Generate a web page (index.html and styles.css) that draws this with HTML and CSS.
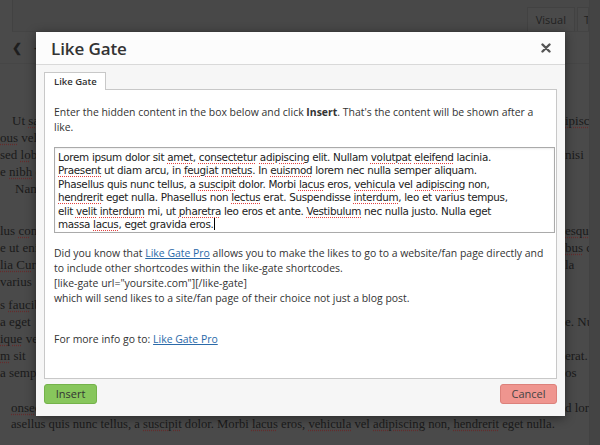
FILE: index.html
```html
<!DOCTYPE html>
<html lang="en">
<head>
<meta charset="utf-8">
<title>Like Gate</title>
<link rel="stylesheet" href="styles.css">
</head>
<body>
<div class="screen">
  <div class="editor">
    <div class="mode-row">
      <span class="mode-tab">Visual</span>
      <span class="mode-tab">Text</span>
    </div>
    <div class="toolbar">
      <span class="tool">&#10094;</span>
      <span class="tool">&#8211;</span>
    </div>
    <div class="content">
      <div class="para">
        <div class="ln"><span class="l ind1">Ut <u>sa</u>pien</span><span class="r"><u>ipisc</u>ing</span></div>
        <div class="ln"><span class="l"><u>ous</u> vel</span><span class="r"></span></div>
        <div class="ln"><span class="l">sed <u>lo</u>bortis</span><span class="r">nisi</span></div>
        <div class="ln"><span class="l">e <u>nibh</u> et</span><span class="r"></span></div>
        <div class="ln"><span class="l ind2">Nam</span><span class="r"></span></div>
      </div>
      <div class="para p2">
        <div class="ln"><span class="l">lus <u>co</u>ngue</span><span class="r"><u>esqu</u>e</span></div>
        <div class="ln"><span class="l">e ut enim</span><span class="r"><u>bus</u> c</span></div>
        <div class="ln"><span class="l"><u>lia Cu</u>rae</span><span class="r">la</span></div>
        <div class="ln"><span class="l">varius</span><span class="r"></span></div>
      </div>
      <div class="para p3">
        <div class="ln"><span class="l">s <u>fauc</u>ibus</span><span class="r"></span></div>
        <div class="ln"><span class="l">a eget</span><span class="r">e. Nulla</span></div>
        <div class="ln"><span class="l"><u>ique</u> vel</span><span class="r"></span></div>
        <div class="ln"><span class="l"><u>m</u> sit</span><span class="r">erat.</span></div>
        <div class="ln"><span class="l">a semper</span><span class="r">os</span></div>
      </div>
      <div class="para p4">
        <div class="ln"><span class="l ind3"><u>onse</u>ctetur</span><span class="r">d lorem</span></div>
        <div class="ln full">asellus quis nunc tellus, a <u>suscipit</u> dolor. Morbi <u>lacus</u> eros, <u>vehicula</u> vel <u>adipiscing</u> non, <u>hendrerit</u> eget nulla.</div>
      </div>
    </div>
  </div>

  <div class="modal">
    <div class="m-head">
      <h1 class="m-title">Like Gate</h1>
      <svg class="m-close" width="10" height="10" viewBox="0 0 10 10"><path d="M1.5 1.5 L8.5 8.5 M8.5 1.5 L1.5 8.5" stroke="#555" stroke-width="2.4" stroke-linecap="round"/></svg>
    </div>
    <div class="m-body">
      <div class="tab">Like Gate</div>
      <div class="panel">
        <p class="txt">Enter the hidden content in the box below and click <b>Insert</b>. That's the content will be shown after a<br>like.</p>
        <div class="area">Lorem ipsum dolor sit <i class="sp">amet</i>, <i class="sp">consectetur</i> <i class="sp">adipiscing</i> elit. Nullam <i class="sp">volutpat</i> <i class="sp">eleifend</i> lacinia.<br><i class="sp">Praesent</i> ut diam arcu, in <i class="sp">feugiat</i> <i class="sp">metus</i>. In <i class="sp">euismod</i> lorem nec nulla semper aliquam.<br>Phasellus quis nunc tellus, a <i class="sp">suscipit</i> dolor. Morbi <i class="sp">lacus</i> eros, <i class="sp">vehicula</i> vel <i class="sp">adipiscing</i> non,<br><i class="sp">hendrerit</i> eget nulla. Phasellus non <i class="sp">lectus</i> erat. Suspendisse <i class="sp">interdum</i>, leo et varius tempus,<br>elit <i class="sp">velit</i> <i class="sp">interdum</i> mi, ut <i class="sp">pharetra</i> leo eros et ante. <i class="sp">Vestibulum</i> nec nulla justo. Nulla eget<br>massa <i class="sp">lacus</i>, eget gravida eros.<span class="caret"></span></div>
        <p class="txt">Did you know that <a href="#">Like Gate Pro</a> allows you to make the likes to go to a website/fan page directly and<br>to include other shortcodes within the like-gate shortcodes.<br>[like-gate url="yoursite.com"][/like-gate]<br>which will send likes to a site/fan page of their choice not just a blog post.</p>
        <p class="txt more">For more info go to: <a href="#">Like Gate Pro</a></p>
      </div>
    </div>
    <div class="m-foot">
      <button class="btn insert">Insert</button>
      <button class="btn cancel">Cancel</button>
    </div>
  </div>
</div>
</body>
</html>
```

FILE: styles.css
```css
* { box-sizing: border-box; }
html, body { margin: 0; padding: 0; }
body {
  width: 600px;
  height: 445px;
  overflow: hidden;
  background: #444;
  font-family: "Open Sans", "Liberation Sans", sans-serif;
}
.screen {
  position: relative;
  width: 600px;
  height: 445px;
  overflow: hidden;
}

.editor {
  width: 590px;
  height: 445px;
  background: #4a4a4a;
  border-right: 1px solid #424242;
  overflow: hidden;
}
.mode-row {
  height: 32px;
  display: flex;
  justify-content: flex-end;
  align-items: flex-end;
  border-bottom: 1px solid #444;
  background: #484848;
  margin-left: 12px;
  border-left: 1px solid #424242;
}
.mode-tab {
  height: 24px;
  line-height: 23px;
  padding: 0 8px;
  font-size: 11px;
  color: #222;
  border: 1px solid #424242;
  border-bottom: none;
  margin-left: 2px;
  background: #4a4a4a;
  white-space: nowrap;
}
.mode-tab:last-child { width: 12px; overflow: hidden; padding: 0 0 0 6px; }
.toolbar {
  height: 32px;
  display: flex;
  align-items: center;
  gap: 12px;
  padding-left: 12px;
  border-bottom: 1px solid #464646;
}
.tool { font-size: 12px; font-weight: 700; color: #1e1e1e; }

.content {
  padding-top: 48px;
  font-family: "Liberation Serif", "Times New Roman", serif;
  font-size: 13px;
  color: #1a1a1a;
}
.para { margin: 0; }
.p2 { margin-top: 25px; }
.p3 { margin-top: 6px; }
.p4 { margin-top: 18px; }
.ln {
  height: 17px;
  line-height: 17px;
  display: flex;
  justify-content: space-between;
  white-space: nowrap;
}
.l { width: 36px; overflow: hidden; }
.ind1 { padding-left: 12px; }
.ind2 { padding-left: 15px; }
.ind3 { padding-left: 11px; }
.r { width: 24px; overflow: hidden; }
.full { display: block; padding-left: 11px; font-size: 12.65px; }
.content u {
  text-decoration: underline dotted #652b2b;
  text-underline-offset: 2px;
}

/* modal */
.modal {
  position: absolute;
  left: 36px;
  top: 32px;
  width: 529px;
  height: 384px;
  background: #f6f6f6;
  box-shadow: 0 2px 10px rgba(0,0,0,0.45);
  display: flex;
  flex-direction: column;
}
.m-head {
  height: 33px;
  background: #fcfcfc;
  border-bottom: 1px solid #d9d9d9;
  display: flex;
  align-items: center;
  justify-content: space-between;
  padding: 0 14px 0 15px;
}
.m-title {
  margin: 0;
  font-size: 17px;
  font-weight: 600;
  color: #333;
  letter-spacing: -0.1px;
}
.m-close { display: block; }
.m-body {
  padding: 7px 8px 0 8px;
}
.tab {
  display: block;
  position: relative;
  z-index: 1;
  height: 18px;
  width: 62px;
  margin-bottom: -1px;
  padding: 3px 0 0 9px;
  border: 1px solid #c8c8c8;
  border-bottom: none;
  background: #fff;
  font-size: 9.5px;
  font-weight: 600;
  color: #333;
  line-height: 12px;
}
.panel {
  height: 290px;
  border: 1px solid #c8c8c8;
  background: #fff;
  padding: 15px 1px 0 9px;
}
.txt {
  margin: 0;
  font-size: 10.45px;
  line-height: 15px;
  color: #333;
}
.txt b { font-weight: 700; }
.txt a { color: #2b6aa9; text-decoration: underline; }
.more { margin-top: 26px; }
.area {
  margin: 12px 0 13px;
  height: 86px;
  border: 1px solid #aaa;
  box-shadow: inset 0 1px 2px rgba(0,0,0,0.08);
  padding: 3px 3px;
  font-family: "DejaVu Sans", Verdana, sans-serif;
  font-size: 10.4px;
  letter-spacing: -0.32px;
  line-height: 13.4px;
  color: #222;
  white-space: nowrap;
  overflow: hidden;
}
.sp {
  font-style: normal;
  text-decoration: underline dotted #e04040;
  text-underline-offset: 2px;
}
.caret {
  display: inline-block;
  width: 1px;
  height: 12px;
  background: #000;
  vertical-align: -2px;
  margin-left: 1px;
}
.m-foot {
  display: flex;
  justify-content: space-between;
  padding: 5px 8px 0 8px;
}
.btn {
  height: 20px;
  border-radius: 3px;
  font-family: "Open Sans", "Liberation Sans", sans-serif;
  font-size: 11px;
  line-height: 18px;
  padding: 0;
  color: #333;
  cursor: pointer;
}
.insert {
  width: 53px;
  background: #87c65c;
  border: 1px solid #74b24a;
}
.cancel {
  width: 57px;
  background: #ef958f;
  border: 1px solid #dc817b;
  color: #444;
}
```
